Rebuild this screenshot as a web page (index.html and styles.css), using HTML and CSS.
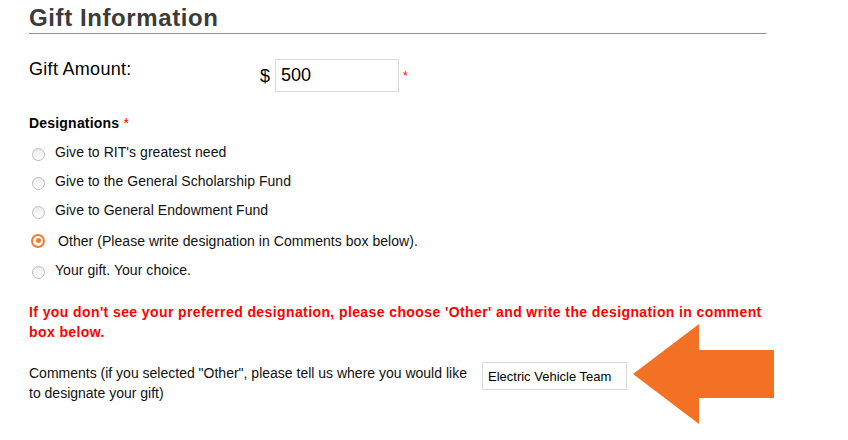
FILE: index.html
```html
<!DOCTYPE html>
<html>
<head>
<meta charset="utf-8">
<link rel="stylesheet" href="styles.css">
</head>
<body>
<main class="page">
  <h2 class="section-title">Gift Information</h2>

  <div class="amount-row">
    <label class="amount-label">Gift Amount:</label>
    <div class="amount-field">
      <span class="currency">$</span>
      <input class="amount-input" type="text" value="500">
      <span class="req req-amount">*</span>
    </div>
  </div>

  <div class="designations">
    <div class="legend">Designations <span class="req">*</span></div>
    <div class="options">
      <label class="option"><span class="radio"></span><span class="option-text">Give to RIT's greatest need</span></label>
      <label class="option"><span class="radio"></span><span class="option-text">Give to the General Scholarship Fund</span></label>
      <label class="option"><span class="radio"></span><span class="option-text">Give to General Endowment Fund</span></label>
      <label class="option option-checked"><span class="radio radio-checked"></span><span class="option-text">Other (Please write designation in Comments box below).</span></label>
      <label class="option"><span class="radio"></span><span class="option-text">Your gift. Your choice.</span></label>
    </div>
  </div>

  <p class="notice">If you don't see your preferred designation, please choose 'Other' and write the designation in comment box below.</p>

  <div class="comments-row">
    <label class="comments-label">Comments (if you selected "Other", please tell us where you would like to designate your gift)</label>
    <input class="comments-input" type="text" value="Electric Vehicle Team">
  </div>

  <svg class="arrow" width="142" height="102" viewBox="0 0 142 102" aria-hidden="true">
    <polygon points="0,50 66,0 66,26 141,26 141,74 66,74 66,100" fill="#f37124"/>
  </svg>
</main>
</body>
</html>
```

FILE: styles.css
```css
* { box-sizing: border-box; }

html, body {
  margin: 0;
  padding: 0;
  background: #fff;
}

body {
  font-family: "Liberation Sans", Arial, sans-serif;
  color: #111;
}

.page {
  position: relative;
  width: 848px;
  height: 440px;
  padding-left: 29px;
  overflow: hidden;
}

.section-title {
  margin: 4px 0 0 0;
  width: 737px;
  font-size: 24px;
  line-height: 28px;
  letter-spacing: 0.6px;
  font-weight: bold;
  color: #3b3b3b;
  padding-bottom: 1px;
  border-bottom: 1px solid #dd7b41;
}

.amount-row {
  display: flex;
  align-items: flex-start;
  margin-top: 24px;
}

.amount-label {
  width: 231px;
  font-size: 18px;
  line-height: 22px;
  letter-spacing: 0.3px;
  color: #000;
}

.amount-field {
  display: flex;
  align-items: center;
  margin-top: 1px;
}

.currency {
  font-size: 18px;
  line-height: 22px;
  color: #000;
  margin-right: 5px;
}

.amount-input {
  width: 124px;
  height: 33px;
  border: 1px solid #d9d9d9;
  padding: 0 5px;
  font-family: "Liberation Sans", Arial, sans-serif;
  font-size: 18px;
  color: #000;
  outline: none;
  margin: 0;
}

.req {
  color: #f00;
}

.req-amount {
  font-size: 12px;
  line-height: 12px;
  margin-left: 4px;
}

.designations {
  margin-top: 22px;
}

.legend {
  font-size: 14px;
  line-height: 18px;
  font-weight: bold;
  letter-spacing: 0.2px;
  color: #000;
}

.legend .req {
  font-weight: normal;
}

.options {
  margin-top: 5px;
  display: flex;
  flex-direction: column;
}

.option {
  display: flex;
  align-items: center;
  height: 29px;
  font-size: 14px;
  line-height: 18px;
  letter-spacing: 0.05px;
  color: #111;
}

.option-checked {
  margin-top: 2px;
}

.radio {
  width: 13px;
  height: 13px;
  border-radius: 50%;
  border: 1px solid #bdbdbd;
  background: linear-gradient(#ececec, #fff);
  margin-left: 3px;
  margin-right: 10px;
  margin-top: 6px;
  flex: none;
}

.radio-checked {
  position: relative;
  width: 14px;
  height: 14px;
  border: 2px solid #f47b2b;
  background: #fff;
  margin-left: 2px;
  margin-top: 0;
  margin-right: 13px;
}

.radio-checked::after {
  content: "";
  position: absolute;
  left: 2.5px;
  top: 2.5px;
  width: 5px;
  height: 5px;
  border-radius: 50%;
  background: #f47b2b;
}

.notice {
  margin: 18px 0 0 0;
  width: 737px;
  font-size: 14px;
  line-height: 20px;
  font-weight: bold;
  letter-spacing: 0.4px;
  color: #f00;
}

.comments-row {
  display: flex;
  align-items: flex-start;
  margin-top: 21px;
}

.comments-label {
  width: 453px;
  font-size: 14px;
  line-height: 20px;
  color: #111;
}

.comments-input {
  width: 145px;
  height: 28px;
  margin: -1px 0 0 0;
  border: 1px solid #d9d9d9;
  padding: 0 5px;
  font-family: "Liberation Sans", Arial, sans-serif;
  font-size: 13px;
  color: #000;
  outline: none;
}

.arrow {
  position: absolute;
  left: 633px;
  top: 324px;
}
```
